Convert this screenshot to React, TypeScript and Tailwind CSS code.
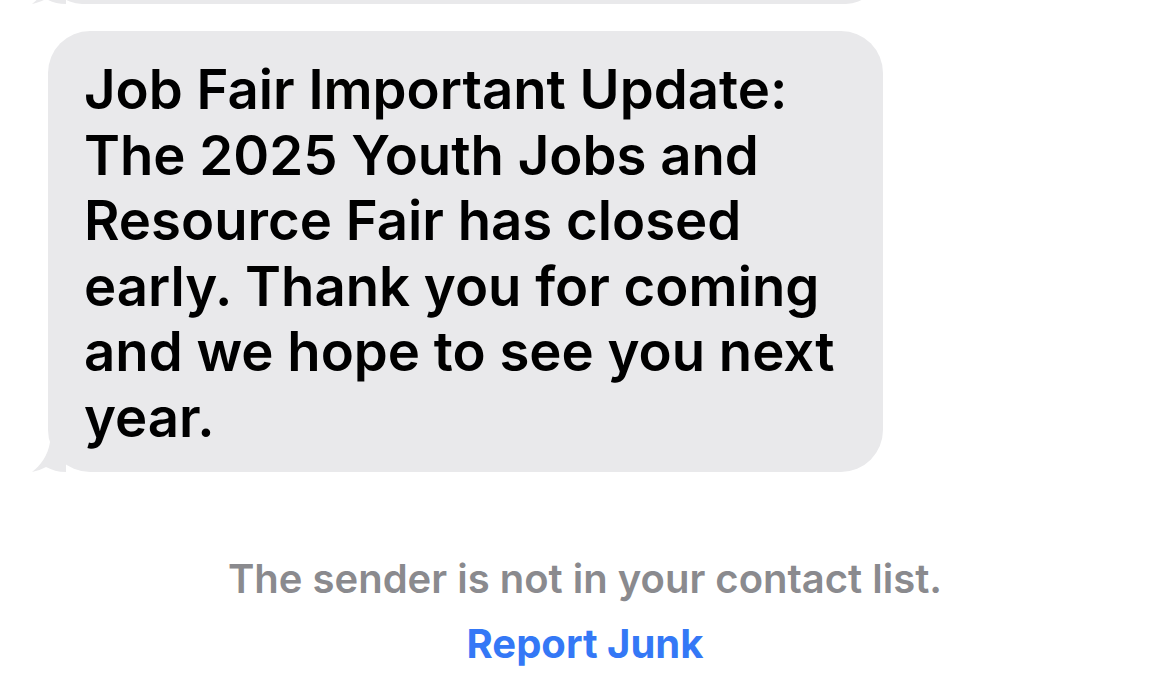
import React from 'react';

const BUBBLE = '#e9e9eb';

const Tail: React.FC<{ className?: string }> = ({ className }) => (
  <svg
    className={className}
    width="34"
    height="40"
    viewBox="0 0 34 40"
    fill={BUBBLE}
  >
    <path d="M18 0 L34 0 L34 40 C26 40 20 38 14 35 C10 37 5 39 0 40 C8 34 16 24 18 10 Z" />
  </svg>
);

const lines = [
  'Job Fair Important Update:',
  'The 2025 Youth Jobs and',
  'Resource Fair has closed',
  'early. Thank you for coming',
  'and we hope to see you next',
  'year.',
];

const App: React.FC = () => {
  return (
    <div
      className="relative w-[1170px] h-[686px] overflow-hidden bg-white"
      style={{ fontFamily: 'Inter, "Noto Sans", sans-serif' }}
    >
      {/* previous bubble, cut off at the top */}
      <div className="relative -mt-[60px] ml-[50px] w-[828px]">
        <div className="h-[64px] rounded-[40px] bg-[#e9e9eb]" />
        <Tail className="absolute -left-[18px] bottom-0" />
      </div>

      {/* message bubble */}
      <div className="relative mt-[27px] ml-[48px] w-[835px]">
        <div className="rounded-[42px] bg-[#e9e9eb] pl-[36px] pr-[20px] pt-[26px] pb-[22px]">
          <p className="text-[54.5px] leading-[65.5px] font-semibold text-black whitespace-nowrap">
            {lines.map((l, i) => (
              <React.Fragment key={i}>
                {l}
                {i < lines.length - 1 && <br />}
              </React.Fragment>
            ))}
          </p>
        </div>
        <Tail className="absolute -left-[16px] bottom-0" />
      </div>

      {/* footer */}
      <div className="mt-[83px] flex flex-col items-center">
        <p className="text-[40px] leading-[48px] font-semibold text-[#8a8a8e]">
          The sender is not in your contact list.
        </p>
        <button className="mt-[17px] text-[40px] leading-[48px] font-bold text-[#3478f6]">
          Report Junk
        </button>
      </div>
    </div>
  );
};

export default App;
